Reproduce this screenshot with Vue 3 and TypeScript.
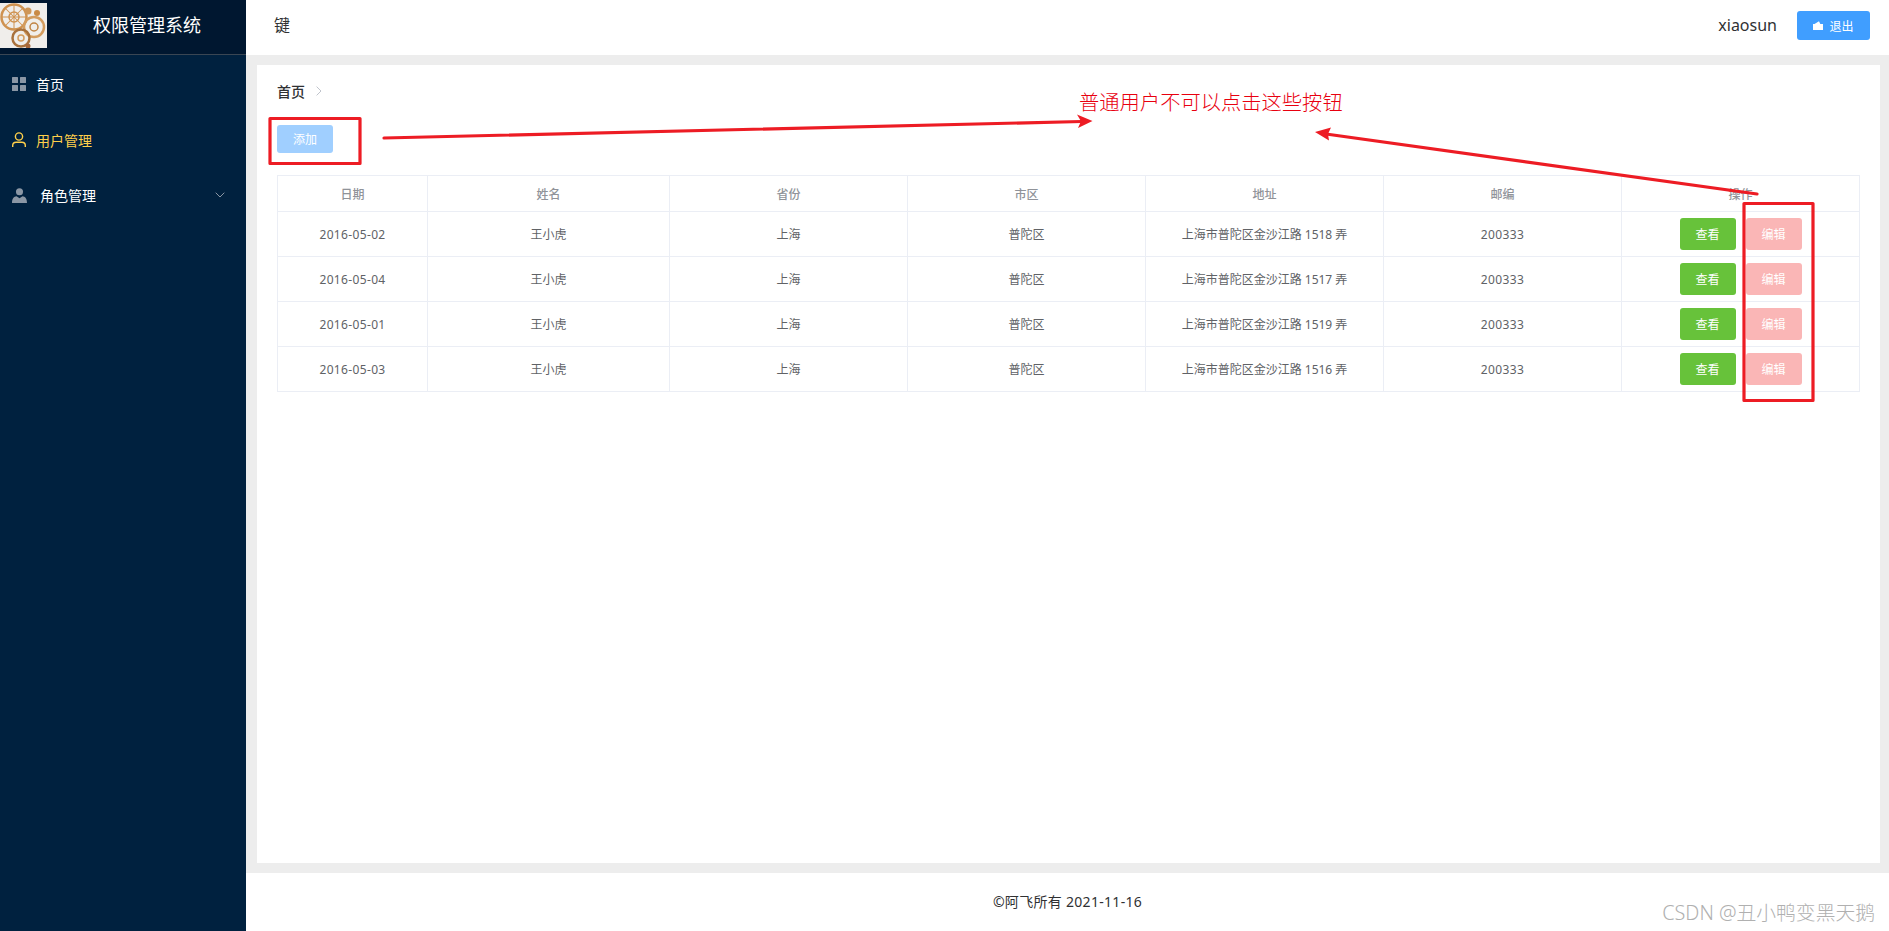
<script setup lang="ts">
interface Row {
  date: string
  name: string
  province: string
  city: string
  address: string
  zip: string
}

const columns: string[] = ['日期', '姓名', '省份', '市区', '地址', '邮编', '操作']

const rows: Row[] = [
  { date: '2016-05-02', name: '王小虎', province: '上海', city: '普陀区', address: '上海市普陀区金沙江路 1518 弄', zip: '200333' },
  { date: '2016-05-04', name: '王小虎', province: '上海', city: '普陀区', address: '上海市普陀区金沙江路 1517 弄', zip: '200333' },
  { date: '2016-05-01', name: '王小虎', province: '上海', city: '普陀区', address: '上海市普陀区金沙江路 1519 弄', zip: '200333' },
  { date: '2016-05-03', name: '王小虎', province: '上海', city: '普陀区', address: '上海市普陀区金沙江路 1516 弄', zip: '200333' }
]

const gearAngles: number[] = [0, 45, 90, 135]
</script>

<template>
  <div class="layout">
    <aside class="aside">
      <div class="brand">
        <svg class="logo" viewBox="0 0 47 45" width="47" height="45">
          <rect width="47" height="45" fill="#f0eeeb" />
          <g fill="none" stroke="#cf9250">
            <circle cx="14" cy="14" r="12.500" stroke-width="2.500" />
            <circle cx="14" cy="14" r="5" stroke-width="1.500" />
            <line v-for="a in gearAngles" :key="a" x1="2" y1="14" x2="26" y2="14" stroke-width="1" :transform="`rotate(${a} 14 14)`" />
            <circle cx="34" cy="24" r="10" stroke="#d39c5e" stroke-width="2.500" />
            <circle cx="34" cy="24" r="4" stroke="#c08443" stroke-width="1.500" />
            <circle cx="21" cy="35" r="8.500" stroke="#a9713c" stroke-width="2.500" />
            <circle cx="21" cy="35" r="3" stroke="#d39c5e" stroke-width="1.500" />
          </g>
          <circle cx="28" cy="8" r="3.500" fill="#cf9657" />
          <circle cx="37" cy="10" r="3" fill="#c98a45" />
          <circle cx="28" cy="43" r="2.500" fill="#a8683a" />
        </svg>
        <span class="brand-title">权限管理系统</span>
      </div>
      <nav class="menu">
        <div class="menu-item">
          <svg class="menu-icon" viewBox="0 0 14 14" width="14" height="14">
            <rect width="6" height="6" rx="0.5" />
            <rect x="8" width="6" height="6" rx="0.5" />
            <rect y="8" width="6" height="6" rx="0.5" />
            <rect x="8" y="8" width="6" height="6" rx="0.5" />
          </svg>
          <span>首页</span>
        </div>
        <div class="menu-item active">
          <svg class="menu-icon" viewBox="0 0 14 15" width="14" height="15">
            <circle cx="7" cy="4.500" r="3.600" fill="none" stroke="currentColor" stroke-width="1.400" />
            <path d="M.7 15v-1.600c0-2 1.500-3.200 3.400-3.200h5.800c1.900 0 3.400 1.200 3.400 3.200V15" fill="none" stroke="currentColor" stroke-width="1.400" />
          </svg>
          <span>用户管理</span>
        </div>
        <div class="menu-item">
          <svg class="menu-icon role-icon" viewBox="0 0 14 14" width="15" height="15">
            <circle cx="7" cy="3.500" r="3.300" />
            <path d="M4.200 7.600 7 9.600l2.800-2c2.400.3 4.200 2 4.200 6.400H0c0-4.400 1.800-6.100 4.200-6.400z" />
          </svg>
          <span class="role-label">角色管理</span>
          <svg class="caret" viewBox="0 0 10 6" width="10" height="6">
            <path d="M.7.7 5 5 9.300.7" fill="none" stroke="#8b97a5" stroke-width="1" />
          </svg>
        </div>
      </nav>
    </aside>

    <div class="content">
      <header class="topbar">
        <span class="topbar-key">键</span>
        <div class="topbar-user">
          <span class="username">xiaosun</span>
          <button class="btn logout" type="button">
            <svg viewBox="0 0 10 9" width="10" height="9">
              <path d="M0 3h1.500L6 .3 7.300 3H10v6H0z" fill="#fff" />
            </svg>
            <span>退出</span>
          </button>
        </div>
      </header>

      <main class="main">
        <section class="card">
          <div class="breadcrumb">
            <span>首页</span>
            <svg viewBox="0 0 6 10" width="6" height="10">
              <path d="M.6.6 5 5 .6 9.400" fill="none" stroke="#c0c4cc" stroke-width="1" />
            </svg>
          </div>
          <button class="btn add" type="button">添加</button>
          <table class="table">
            <thead>
              <tr>
                <th v-for="col in columns" :key="col">{{ col }}</th>
              </tr>
            </thead>
            <tbody>
              <tr v-for="row in rows" :key="row.date">
                <td class="date">{{ row.date }}</td>
                <td>{{ row.name }}</td>
                <td>{{ row.province }}</td>
                <td>{{ row.city }}</td>
                <td>{{ row.address }}</td>
                <td class="date">{{ row.zip }}</td>
                <td>
                  <div class="actions">
                    <button class="btn view" type="button">查看</button>
                    <button class="btn edit" type="button">编辑</button>
                  </div>
                </td>
              </tr>
            </tbody>
          </table>
        </section>
      </main>

      <footer class="footer">©阿飞所有 2021-11-16</footer>
    </div>

    <!-- annotations drawn on top of the screenshot -->
    <svg class="marks" viewBox="0 0 1889 931" width="1889" height="931">
      <g fill="none" stroke="#ed1c24" stroke-width="3.200" stroke-linejoin="round" stroke-linecap="round">
        <rect x="270" y="118.500" width="90" height="45" />
        <rect x="1744" y="203.500" width="69" height="197" />
        <line x1="384" y1="138" x2="1082" y2="121.500" />
        <line x1="1757" y1="194" x2="1326" y2="134" />
      </g>
      <path d="M1092.500 121 1077 114.500 1081 121.300 1078 128z" fill="#ed1c24" />
      <path d="M1315 132 1331 127.500 1328 134 1329 140.500z" fill="#ed1c24" />
    </svg>
    <div class="note">普通用户不可以点击这些按钮</div>
    <div class="watermark">CSDN @丑小鸭变黑天鹅</div>
  </div>
</template>

<style>
html,
body {
  margin: 0;
  padding: 0;
}
</style>

<style scoped>
.layout {
  position: relative;
  display: flex;
  width: 1889px;
  height: 931px;
  overflow: hidden;
  font-family: "Noto Sans", "Noto Sans CJK SC", sans-serif;
  background: #fff;
}

.aside {
  display: flex;
  flex-direction: column;
  flex: none;
  width: 246px;
  background: #00213f;
}

.brand {
  display: flex;
  align-items: center;
  flex: none;
  width: 247px;
  height: 55px;
  box-sizing: border-box;
  background: #001730;
  border-bottom: 1px solid #3a4653;
}

.logo {
  flex: none;
  margin-top: -3px;
  filter: blur(0.4px);
}

.brand-title {
  margin-left: 46px;
  margin-top: -4px;
  color: #fff;
  font-size: 18px;
  line-height: 24px;
}

.menu {
  padding-top: 1px;
}

.menu-item {
  display: flex;
  align-items: center;
  height: 55.500px;
  padding-left: 12px;
  color: #fff;
  font-size: 14px;
}

.menu-item.active {
  color: #ffd04b;
  padding-top: 1px;
  box-sizing: border-box;
}

.menu-icon {
  flex: none;
  margin-right: 10px;
  fill: #8b97a5;
}

.menu-item.active .menu-icon {
  fill: currentColor;
}

.role-label {
  margin-left: 3px;
}

.role-icon {
  margin-top: 2px;
}

.caret {
  margin-left: auto;
  margin-right: 21px;
}

.content {
  display: flex;
  flex: 1;
  flex-direction: column;
  min-width: 0;
}

.topbar {
  display: flex;
  align-items: center;
  justify-content: space-between;
  flex: none;
  height: 55px;
  box-sizing: border-box;
  padding: 0 19px 4px 28px;
  color: #303133;
  font-size: 16px;
  background: #fff;
}

.topbar-key {
  margin-top: -4px;
}

.topbar-user {
  display: flex;
  align-items: center;
  gap: 20px;
}

.username {
  font-size: 16px;
  margin-top: -2px;
}

.main {
  display: flex;
  flex: 1;
  min-height: 0;
  padding: 10px 9px 10px 11px;
  background: #ededed;
}

.card {
  flex: 1;
  padding: 16px 20px 0;
  background: #fff;
}

.breadcrumb {
  display: flex;
  align-items: center;
  gap: 11px;
  height: 20px;
  margin-bottom: 24px;
  color: #303133;
  font-size: 14px;
  font-weight: 500;
}

.btn {
  padding: 0;
  border: 0;
  border-radius: 3px;
  color: #fff;
  font-family: inherit;
  font-size: 12px;
}

.add {
  display: block;
  width: 56px;
  height: 28px;
  margin-bottom: 22px;
  background: #a0cfff;
}

.logout {
  display: flex;
  align-items: center;
  justify-content: center;
  gap: 6px;
  width: 73px;
  height: 29px;
  background: #409eff;
}

.view,
.edit {
  width: 56px;
  height: 32px;
}

.view {
  background: #67c23a;
}

.edit {
  background: #fab6b6;
}

.table {
  width: 1583px;
  table-layout: fixed;
  border-collapse: collapse;
  color: #606266;
  font-size: 12px;
}

.table th,
.table td {
  padding: 0;
  border: 1px solid #ebeef5;
  text-align: center;
}

.table th {
  height: 35px;
  color: #909399;
  font-weight: 500;
}

.table th:first-child {
  width: 149px;
}

.table th:nth-child(2) {
  width: 241px;
}

.table td {
  height: 44px;
}

.date {
  letter-spacing: 0.35px;
}

.actions {
  display: flex;
  justify-content: center;
  gap: 10px;
}

.footer {
  flex: none;
  height: 58px;
  color: #303133;
  font-size: 14px;
  letter-spacing: 0.3px;
  line-height: 58px;
  text-align: center;
  background: #fff;
}

.marks {
  position: absolute;
  top: 0;
  left: 0;
  pointer-events: none;
}

.note {
  position: absolute;
  top: 88px;
  left: 1079px;
  color: #e8000f;
  font-size: 20.300px;
  font-weight: 300;
  line-height: 28px;
  white-space: nowrap;
}

.watermark {
  position: absolute;
  top: 900px;
  right: 14px;
  color: #b0b0b0;
  font-size: 19.800px;
  font-weight: 300;
  line-height: 26px;
  white-space: nowrap;
}
</style>
